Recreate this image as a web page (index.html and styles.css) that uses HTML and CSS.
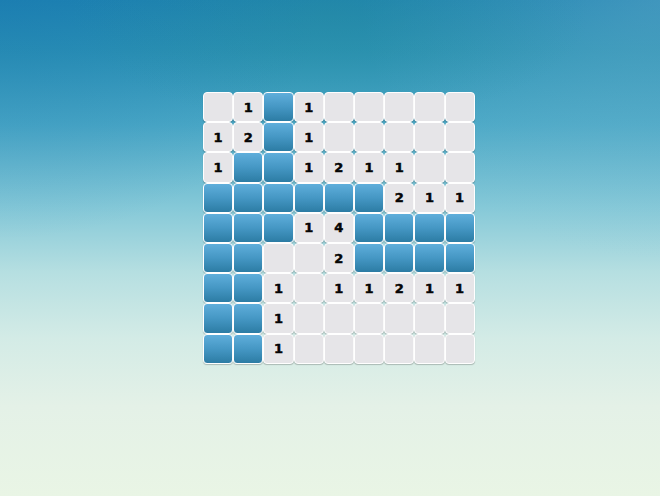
FILE: index.html
```html
<!DOCTYPE html>
<html>
<head>
<meta charset="utf-8">
<link rel="stylesheet" href="styles.css">
</head>
<body>
<main class="scene">
  <div class="board">
    <div class="cell"></div><div class="cell">1</div><div class="cell blue"></div><div class="cell">1</div><div class="cell"></div><div class="cell"></div><div class="cell"></div><div class="cell"></div><div class="cell"></div>
    <div class="cell">1</div><div class="cell">2</div><div class="cell blue"></div><div class="cell">1</div><div class="cell"></div><div class="cell"></div><div class="cell"></div><div class="cell"></div><div class="cell"></div>
    <div class="cell">1</div><div class="cell blue"></div><div class="cell blue"></div><div class="cell">1</div><div class="cell">2</div><div class="cell">1</div><div class="cell">1</div><div class="cell"></div><div class="cell"></div>
    <div class="cell blue"></div><div class="cell blue"></div><div class="cell blue"></div><div class="cell blue"></div><div class="cell blue"></div><div class="cell blue"></div><div class="cell">2</div><div class="cell">1</div><div class="cell">1</div>
    <div class="cell blue"></div><div class="cell blue"></div><div class="cell blue"></div><div class="cell">1</div><div class="cell">4</div><div class="cell blue"></div><div class="cell blue"></div><div class="cell blue"></div><div class="cell blue"></div>
    <div class="cell blue"></div><div class="cell blue"></div><div class="cell"></div><div class="cell"></div><div class="cell">2</div><div class="cell blue"></div><div class="cell blue"></div><div class="cell blue"></div><div class="cell blue"></div>
    <div class="cell blue"></div><div class="cell blue"></div><div class="cell">1</div><div class="cell"></div><div class="cell">1</div><div class="cell">1</div><div class="cell">2</div><div class="cell">1</div><div class="cell">1</div>
    <div class="cell blue"></div><div class="cell blue"></div><div class="cell">1</div><div class="cell"></div><div class="cell"></div><div class="cell"></div><div class="cell"></div><div class="cell"></div><div class="cell"></div>
    <div class="cell blue"></div><div class="cell blue"></div><div class="cell">1</div><div class="cell"></div><div class="cell"></div><div class="cell"></div><div class="cell"></div><div class="cell"></div><div class="cell"></div>
  </div>
</main>
</body>
</html>
```
FILE: styles.css
```css
html, body {
  margin: 0;
  padding: 0;
  width: 660px;
  height: 496px;
  overflow: hidden;
}
body {
  background-color: #e6f2e6;
  background-image:
    radial-gradient(ellipse 260px 110px at 330px 15px, rgba(40,140,150,0.35), rgba(40,140,150,0) 100%),
    radial-gradient(ellipse 320px 240px at 0px 0px, rgba(20,110,175,0.3), rgba(20,110,175,0) 100%),
    radial-gradient(ellipse 300px 260px at 660px 0px, rgba(140,190,215,0.3), rgba(140,190,215,0) 100%),
    linear-gradient(to bottom, #1f85b2 0%, #2b92b5 10%, #4aa8c6 25%, #86c9d8 42%, #b6dfe1 55%, #d3ebe6 68%, #e4f1e7 82%, #e9f5e5 100%);
  font-family: "DejaVu Sans", "Liberation Sans", sans-serif;
}
.scene {
  padding: 92px 0 0 203px;
}
.board {
  display: grid;
  grid-template-columns: repeat(9, 30.2px);
  grid-auto-rows: 30.2px;
  width: max-content;
}
.cell {
  box-sizing: border-box;
  border: 1px solid #ffffff;
  border-radius: 4px;
  background: #e6e5e8;
  box-shadow: 0 1px 1px rgba(0,0,0,0.22);
  display: flex;
  align-items: center;
  justify-content: center;
  font-weight: 900;
  font-size: 13px;
  color: #050505;
  line-height: 1;
  -webkit-text-stroke: 0.5px #050505;
}
.cell.blue {
  background: linear-gradient(to bottom, #5faedb 0%, #4597c4 50%, #2c7ca4 100%);
}
```
